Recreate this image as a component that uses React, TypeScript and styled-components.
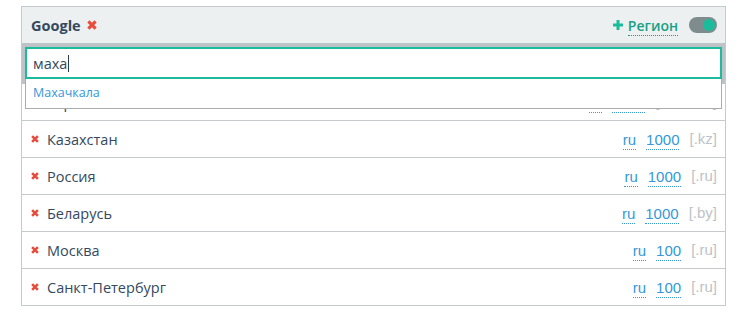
import React from "react";
import styled, { createGlobalStyle } from "styled-components";

type Region = {
  name: string;
  lang: string;
  limit: number;
  domain: string;
};

const regions: Region[] = [
  { name: "Украина", lang: "ru", limit: 1000, domain: ".com.ua" },
  { name: "Казахстан", lang: "ru", limit: 1000, domain: ".kz" },
  { name: "Россия", lang: "ru", limit: 1000, domain: ".ru" },
  { name: "Беларусь", lang: "ru", limit: 1000, domain: ".by" },
  { name: "Москва", lang: "ru", limit: 100, domain: ".ru" },
  { name: "Санкт-Петербург", lang: "ru", limit: 100, domain: ".ru" },
];

const CrossIcon = ({ size }: { size: number }) => (
  <svg width={size} height={size} viewBox="0 0 10 10">
    <path
      d="M1.4 1.4 L8.6 8.6 M8.6 1.4 L1.4 8.6"
      stroke="#e74c3c"
      strokeWidth="3.2"
      strokeLinecap="butt"
    />
  </svg>
);

const PlusIcon = () => (
  <svg width="10" height="10" viewBox="0 0 10 10">
    <path d="M5 0 V10 M0 5 H10" stroke="#1abc9c" strokeWidth="3" />
  </svg>
);

const App = () => {
  return (
    <>
      <GlobalStyle />
      <Panel>
        <Header>
          <TitleGroup>
            <Title>Google</Title>
            <CrossIcon size={10} />
          </TitleGroup>
          <Actions>
            <AddRegion>
              <PlusIcon />
              <AddLabel>Регион</AddLabel>
            </AddRegion>
            <Toggle>
              <Knob />
            </Toggle>
          </Actions>
        </Header>
        <SearchBar>
          <SearchField>
            маха
            <Caret />
          </SearchField>
          <Suggestions>
            <Suggestion>Махачкала</Suggestion>
          </Suggestions>
        </SearchBar>
        <List>
          {regions.map((region, index) => (
            <Row key={index}>
              <RowName>
                <CrossIcon size={8} />
                <NameText>{region.name}</NameText>
              </RowName>
              <RowMeta>
                <MetaLink>{region.lang}</MetaLink>
                <MetaLink>{region.limit}</MetaLink>
                <Domain>[{region.domain}]</Domain>
              </RowMeta>
            </Row>
          ))}
        </List>
      </Panel>
    </>
  );
};

const GlobalStyle = createGlobalStyle`
  body {
    margin: 0;
    background: #ffffff;
    font-family: "Open Sans", "Liberation Sans", sans-serif;
  }
`;

const Panel = styled.div`
  width: 703px;
  margin: 6px 0 0 21px;
  border: 1px solid #c6cacc;
  border-bottom: none;
  background: #ffffff;
`;

const Header = styled.div`
  height: 36px;
  display: flex;
  align-items: center;
  justify-content: space-between;
  padding: 0 8px 0 9px;
  background: #ecf0f1;
`;

const TitleGroup = styled.div`
  display: flex;
  align-items: center;
  gap: 6px;
`;

const Title = styled.span`
  font-size: 14.5px;
  font-weight: 700;
  color: #34495e;
`;

const Actions = styled.div`
  display: flex;
  align-items: center;
  gap: 11px;
`;

const AddRegion = styled.div`
  display: flex;
  align-items: center;
  gap: 5px;
`;

const AddLabel = styled.span`
  font-size: 14px;
  font-weight: 600;
  color: #16a085;
  line-height: 18px;
  border-bottom: 1px dotted #16a085;
  margin-top: 2px;
`;

const Toggle = styled.div`
  width: 28px;
  height: 16px;
  border-radius: 8px;
  background: #7f8c8d;
  display: flex;
  align-items: center;
  justify-content: flex-end;
  padding: 0 2px;
  box-sizing: border-box;
`;

const Knob = styled.div`
  width: 12px;
  height: 12px;
  border-radius: 50%;
  background: #1abc9c;
`;

const SearchBar = styled.div`
  position: relative;
  padding: 4px 3px 5px 3px;
  background: #bdc3c7;
`;

const SearchField = styled.div`
  height: 32px;
  box-sizing: border-box;
  border: 2px solid #1abc9c;
  background: #ffffff;
  display: flex;
  align-items: center;
  padding-left: 6px;
  font-size: 14.5px;
  color: #34495e;
`;

const Caret = styled.span`
  width: 1px;
  height: 17px;
  margin-left: 1px;
  background: #2c3e50;
`;

const Suggestions = styled.div`
  position: absolute;
  left: 3px;
  right: 3px;
  top: 36px;
  height: 30px;
  box-sizing: border-box;
  background: #ffffff;
  border: 1px solid #a9adaf;
  border-top: none;
  display: flex;
  align-items: center;
  padding-bottom: 2px;
  z-index: 2;
`;

const Suggestion = styled.div`
  padding-left: 7px;
  font-size: 12.5px;
  color: #3498db;
`;

const List = styled.div`
  display: flex;
  flex-direction: column;
`;

const Row = styled.div`
  height: 36px;
  display: flex;
  align-items: center;
  justify-content: space-between;
  padding: 0 8px 0 9px;
  border-bottom: 1px solid #c6cacc;
`;

const RowName = styled.div`
  display: flex;
  align-items: center;
  gap: 8px;
`;

const NameText = styled.span`
  font-size: 14.5px;
  color: #34495e;
`;

const RowMeta = styled.div`
  display: flex;
  align-items: center;
  gap: 10px;
  font-family: "Liberation Sans", Arial, sans-serif;
  font-size: 15px;
`;

const MetaLink = styled.span`
  color: #3498db;
  line-height: 18px;
  border-bottom: 1px dotted #3498db;
  margin-top: 3px;
`;

const Domain = styled.span`
  color: #bdc3c7;
  line-height: 18px;
`;

export default App;
